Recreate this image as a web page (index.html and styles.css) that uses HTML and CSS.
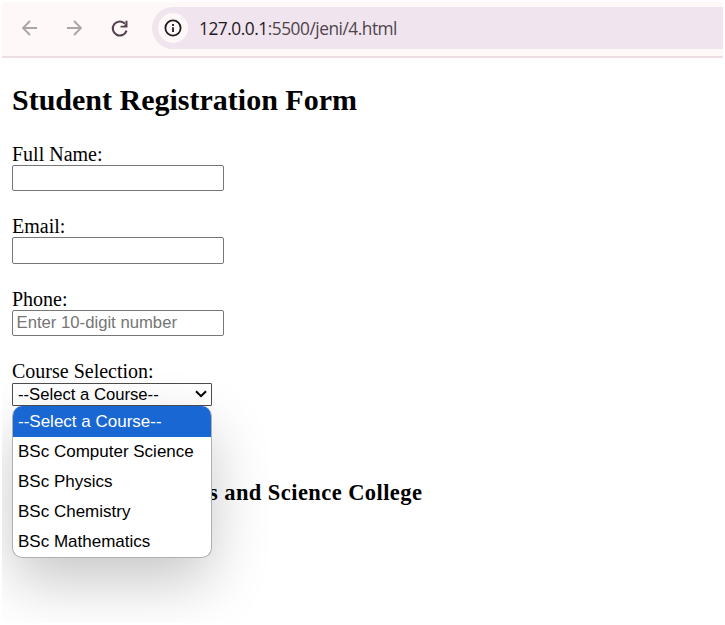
FILE: index.html
```html
<!DOCTYPE html>
<html lang="en">
<head>
<meta charset="utf-8">
<title>Student Registration Form</title>
<link rel="stylesheet" href="styles.css">
</head>
<body>
<div class="window">
  <header class="toolbar">
    <svg class="nav back" viewBox="0 0 20 20"><path d="M17 10H3.5M10 3L3 10l7 7"/></svg>
    <svg class="nav forward" viewBox="0 0 20 20"><path d="M3 10h13.5M10 3l7 7-7 7"/></svg>
    <svg class="nav reload" viewBox="0 0 20 20"><path d="M15.2 5.4A6.7 6.7 0 1 0 16.7 12"/><path class="solid" d="M17.6 2.5v6.6H11V7.4l3.2-.1 1.5-1.7V2.5z"/></svg>
    <div class="address">
      <span class="info"><svg viewBox="0 0 18 18"><circle cx="9" cy="9" r="7.6"/><path d="M9 8.2v4.8M9 5v2"/></svg></span>
      <span class="url"><span class="host">127.0.0.1</span>:5500/jeni/4.html</span>
    </div>
  </header>
  <main class="page">
    <h2>Student Registration Form</h2>
    <form>
      <div class="field"><label for="name">Full Name:</label><input id="name" type="text"></div>
      <div class="field"><label for="email">Email:</label><input id="email" type="email"></div>
      <div class="field"><label for="phone">Phone:</label><input id="phone" type="text" placeholder="Enter 10-digit number"></div>
      <div class="field course">
        <label>Course Selection:</label>
        <div class="select"><span>--Select a Course--</span><svg viewBox="0 0 12 8"><path d="M1 1.2l5 5 5-5"/></svg>
          <ul class="menu">
            <li class="active">--Select a Course--</li>
            <li>BSc Computer Science</li>
            <li>BSc Physics</li>
            <li>BSc Chemistry</li>
            <li>BSc Mathematics</li>
          </ul>
        </div>
      </div>
      <button class="submit" type="button"></button>
    </form>
    <h3>s and Science College</h3>
  </main>
</div>
</body>
</html>
```
FILE: styles.css
```css
* { box-sizing: border-box; }
body {
  margin: 0;
  padding: 2px;
  height: 625px;
  overflow: hidden;
  background: #fff;
  color: #000;
  font-family: "Liberation Serif", serif;
  font-size: 20px;
}
.window { height: 621px; width: 721px; overflow: hidden; }
.toolbar {
  height: 56px;
  display: flex;
  align-items: flex-start;
  padding: 5px 0 0 18px;
  background: #fff8f8;
  border-bottom: 2px solid #f0dde4;
}
.nav {
  width: 20px;
  height: 20px;
  margin: 11px 25px 0 0;
  fill: none;
  stroke: #aaa4a7;
  stroke-width: 1.8;
}
.back { width: 20px; margin-right: 24px; }
.reload { width: 21px; height: 21px; stroke: #554350; stroke-width: 2; margin-right: 22px; }
.reload .solid { fill: #554350; stroke: none; }
.address {
  flex: 1;
  height: 42px;
  display: flex;
  align-items: center;
  padding-left: 6px;
  border-radius: 21px 0 0 21px;
  background: #f0e4ee;
}
.info {
  width: 30px;
  height: 30px;
  display: flex;
  align-items: center;
  justify-content: center;
  border-radius: 50%;
  background: #fff8f8;
}
.info svg { width: 18px; height: 18px; fill: none; stroke: #1f1a1d; stroke-width: 1.8; }
.url {
  margin: 1px 0 0 11px;
  font-family: "Open Sans", "Noto Sans", sans-serif;
  font-size: 17.3px;
  letter-spacing: -0.47px;
  line-height: 24px;
  color: #4f444b;
  white-space: nowrap;
}
.host { color: #1f1a1d; }
.page { padding: 0 10px; }
h2 { margin: 24px 0 26px; font-size: 30px; line-height: 35px; white-space: nowrap; }
.field { height: 72.4px; }
.field label { display: block; height: 22px; line-height: 22px; }
.field input {
  display: block;
  width: 212px;
  height: 26px;
  padding: 1px 3.5px;
  border: 1px solid #767676;
  border-radius: 2px;
  background: #fff;
  font: 16.7px "Liberation Sans", sans-serif;
}
.field #email { height: 27px; }
input::placeholder { color: #757575; }
.course { height: 70px; }
.select {
  position: relative;
  width: 200px;
  height: 23px;
  margin-top: 0.8px;
  display: flex;
  align-items: center;
  justify-content: space-between;
  padding: 0 4px 0 5px;
  border: 1px solid #4d4d4d;
  border-radius: 1px;
  font: 16.67px/21px "Liberation Sans", sans-serif;
}
.select svg { width: 12px; height: 8px; fill: none; stroke: #000; stroke-width: 2; }
.menu {
  position: absolute;
  left: -1px;
  top: 22px;
  width: 200px;
  height: 152px;
  margin: 0;
  padding: 0;
  list-style: none;
  overflow: hidden;
  border: 1px solid #b0b0b0;
  border-top: 0;
  border-radius: 10px;
  background: #fff;
  box-shadow: 0 24px 60px -2px rgba(0, 0, 0, 0.23);
  font-size: 17px;
}
.menu li { height: 30px; padding-left: 5px; line-height: 30px; }
.menu .active { height: 31px; line-height: 32px; background: #1967d2; color: #fff; }
.submit { display: block; width: 70px; height: 26px; padding: 0; border: 1px solid #6b6b6b; border-radius: 3px; background: #efefef; }
h3 { margin: 22.5px 0 0; padding-left: 197px; font-size: 22.5px; line-height: 27px; white-space: nowrap; letter-spacing: 0.43px; }
```
